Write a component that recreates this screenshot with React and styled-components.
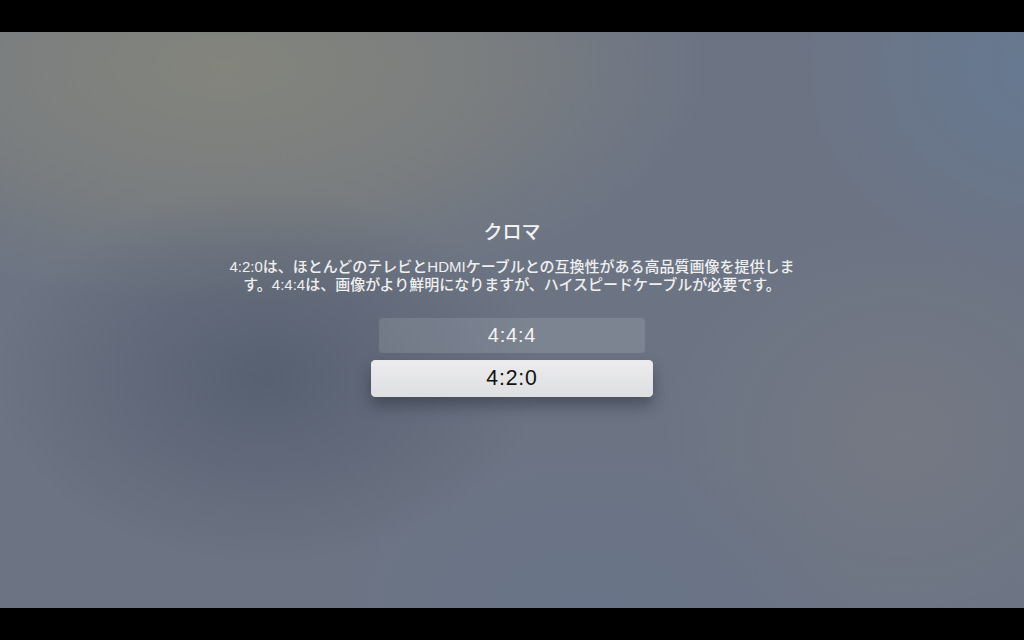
import React from "react";
import styled, { createGlobalStyle } from "styled-components";

const Global = createGlobalStyle`
  html, body { margin: 0; padding: 0; background: #000; }
  body { font-family: "Liberation Sans", "Noto Sans CJK JP", sans-serif; }
`;

const Page = styled.div`
  width: 1024px;
  height: 640px;
  background: #000;
  display: flex;
  flex-direction: column;
  padding: 32px 0;
  box-sizing: border-box;
  overflow: hidden;
`;

const Screen = styled.main`
  flex: 1;
  display: flex;
  flex-direction: column;
  align-items: center;
  padding-top: 187px;
  box-sizing: border-box;
  background:
    radial-gradient(ellipse 380px 260px at 26% 60%, rgba(84, 93, 109, 0.85), rgba(84, 93, 109, 0) 72%),
    radial-gradient(ellipse 600px 300px at 22% 6%, rgba(131, 132, 124, 1), rgba(131, 132, 124, 0.65) 40%, rgba(131, 132, 124, 0) 80%),
    radial-gradient(ellipse 320px 280px at 102% 6%, rgba(102, 121, 145, 1), rgba(102, 121, 145, 0) 75%),
    radial-gradient(ellipse 340px 220px at 58% 100%, rgba(104, 116, 136, 0.9), rgba(104, 116, 136, 0) 75%),
    radial-gradient(ellipse 320px 280px at 88% 70%, rgba(117, 121, 130, 0.9), rgba(117, 121, 130, 0) 75%),
    #6c7484;
`;

const Title = styled.h1`
  margin: 0;
  font-family: "Noto Sans CJK JP", sans-serif;
  font-size: 19px;
  line-height: 24px;
  font-weight: 500;
  color: #f2f2f2;
`;

const Description = styled.p`
  margin: 15px 0 0;
  width: 640px;
  text-align: center;
  font-size: 15px;
  line-height: 18px;
  font-weight: 500;
  color: #efefef;
  font-family: "Liberation Sans", "Noto Sans CJK JP", sans-serif;
`;

const Line = styled.span`
  display: block;
  white-space: nowrap;
`;

const Options = styled.ul`
  list-style: none;
  margin: 24px 0 0;
  padding: 0;
  display: flex;
  flex-direction: column;
  gap: 8px;
`;

const Option = styled.li`
  width: 266px;
  height: 35px;
  border-radius: 4px;
  display: flex;
  align-items: center;
  justify-content: center;
  font-family: "Liberation Sans", sans-serif;
  font-size: 20px;
  letter-spacing: 0.8px;
  background: ${(p) =>
    p.$focused
      ? "linear-gradient(180deg, #ececee 0%, #dedfe1 100%)"
      : "rgba(255, 255, 255, 0.11)"};
  color: ${(p) => (p.$focused ? "#111" : "#f4f4f4")};
  transform: ${(p) => (p.$focused ? "scale(1.06)" : "none")};
  box-shadow: ${(p) =>
    p.$focused ? "0 8px 14px rgba(30, 36, 48, 0.45)" : "none"};
`;

const options = [
  { label: "4:4:4", focused: false },
  { label: "4:2:0", focused: true },
];

export default function App() {
  return (
    <>
      <Global />
      <Page>
        <Screen>
          <Title>クロマ</Title>
          <Description>
            <Line>4:2:0は、ほとんどのテレビとHDMIケーブルとの互換性がある高品質画像を提供しま</Line>
            <Line>す。4:4:4は、画像がより鮮明になりますが、ハイスピードケーブルが必要です。</Line>
          </Description>
          <Options>
            {options.map((o) => (
              <Option key={o.label} $focused={o.focused}>
                {o.label}
              </Option>
            ))}
          </Options>
        </Screen>
      </Page>
    </>
  );
}
